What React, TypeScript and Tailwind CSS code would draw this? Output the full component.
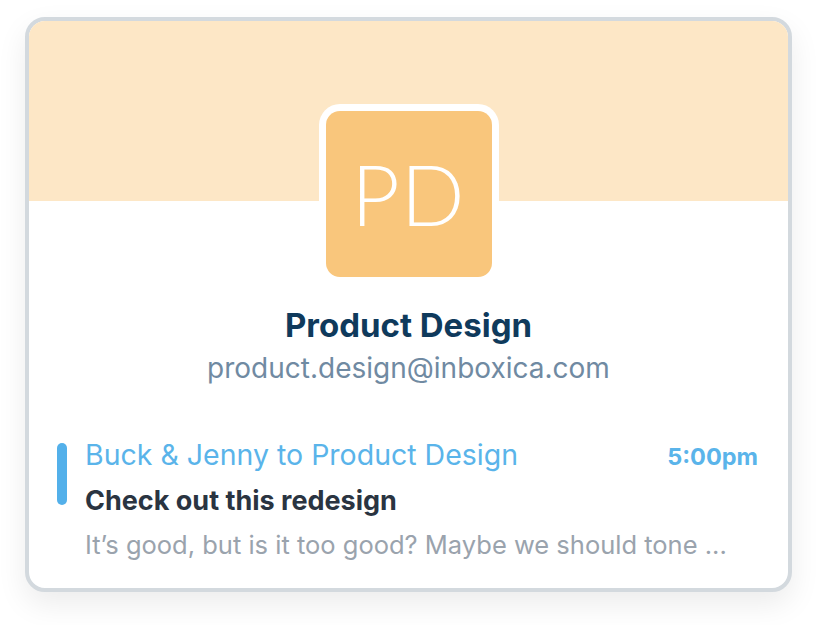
import React from "react";

export default function App() {
  return (
    <div className="w-[817px] h-[625px] bg-white pt-[17px] pl-[25px]" style={{ fontFamily: "Inter, 'Noto Sans', sans-serif" }}>
      <div className="w-[767px] h-[575px] rounded-[20px] border-4 border-[#d3d9de] bg-white overflow-hidden shadow-[0_12px_30px_rgba(0,0,0,0.08)] flex flex-col">
        <div className="h-[180px] shrink-0 bg-[#fde7c6]" />
        <div className="flex justify-center -mt-[97px]">
          <div className="w-[180px] h-[180px] rounded-[21px] bg-white p-[7px]">
            <div className="w-full h-full rounded-[14px] bg-[#f9c67c] flex items-center justify-center">
              <span className="text-white text-[84px] leading-none font-light tracking-[1px]" style={{ fontFamily: "Lato, sans-serif" }}>PD</span>
            </div>
          </div>
        </div>
        <div className="mt-[22px] text-center text-[33px] leading-[38px] font-bold text-[#0f3a5c]">Product Design</div>
        <div className="mt-[7px] text-center text-[28px] leading-[34px] text-[#708aa2]">product.design@inboxica.com</div>
        <div className="mt-[53px] flex pl-[28px] pr-[30px]">
          <div className="w-[10px] h-[62px] mt-[5px] rounded-full bg-[#53b0ea] shrink-0" />
          <div className="ml-[18px] flex-1 flex flex-col">
            <div className="flex justify-between items-baseline">
              <span className="text-[28.5px] leading-[34px] text-[#5ab4ea]">Buck &amp; Jenny to Product Design</span>
              <span className="text-[23.5px] leading-[34px] font-bold text-[#5ab4ea]">5:00pm</span>
            </div>
            <div className="mt-[11px] text-[27px] leading-[32px] font-bold text-[#2a3441]">Check out this redesign</div>
            <div className="mt-[13px] text-[25.5px] leading-[30px] text-[#9aa3ad]">It’s good, but is it too good? Maybe we should tone ...</div>
          </div>
        </div>
      </div>
    </div>
  );
}
